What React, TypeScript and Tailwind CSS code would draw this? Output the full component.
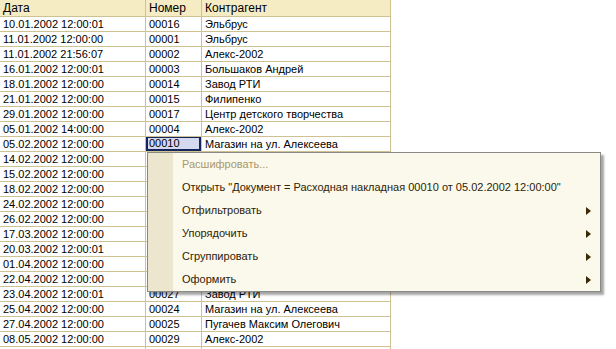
import { ReactNode } from 'react'

type Row = { date: string; num: string; agent: string }

const rows: Row[] = [
  { date: '10.01.2002 12:00:01', num: '00016', agent: 'Эльбрус' },
  { date: '11.01.2002 12:00:00', num: '00001', agent: 'Эльбрус' },
  { date: '11.01.2002 21:56:07', num: '00002', agent: 'Алекс-2002' },
  { date: '16.01.2002 12:00:01', num: '00003', agent: 'Большаков Андрей' },
  { date: '18.01.2002 12:00:00', num: '00014', agent: 'Завод РТИ' },
  { date: '21.01.2002 12:00:00', num: '00015', agent: 'Филипенко' },
  { date: '29.01.2002 12:00:00', num: '00017', agent: 'Центр детского творчества' },
  { date: '05.01.2002 14:00:00', num: '00004', agent: 'Алекс-2002' },
  { date: '05.02.2002 12:00:00', num: '00010', agent: 'Магазин на ул. Алексеева' },
  { date: '14.02.2002 12:00:00', num: '00005', agent: 'Эльбрус' },
  { date: '15.02.2002 12:00:00', num: '00006', agent: 'Филипенко' },
  { date: '18.02.2002 12:00:00', num: '00007', agent: 'Алекс-2002' },
  { date: '24.02.2002 12:00:00', num: '00008', agent: 'Завод РТИ' },
  { date: '26.02.2002 12:00:00', num: '00009', agent: 'Эльбрус' },
  { date: '17.03.2002 12:00:00', num: '00011', agent: 'Алекс-2002' },
  { date: '20.03.2002 12:00:01', num: '00012', agent: 'Большаков Андрей' },
  { date: '01.04.2002 12:00:00', num: '00013', agent: 'Эльбрус' },
  { date: '22.04.2002 12:00:00', num: '00026', agent: 'Филипенко' },
  { date: '23.04.2002 12:00:01', num: '00027', agent: 'Завод РТИ' },
  { date: '25.04.2002 12:00:00', num: '00024', agent: 'Магазин на ул. Алексеева' },
  { date: '27.04.2002 12:00:00', num: '00025', agent: 'Пугачев Максим Олегович' },
  { date: '08.05.2002 12:00:00', num: '00029', agent: 'Алекс-2002' },
  { date: '', num: '', agent: '' },
]

const menuItems = [
  { label: 'Расшифровать...', disabled: true, sub: false },
  {
    label: 'Открыть "Документ = Расходная накладная 00010 от 05.02.2002 12:00:00"',
    disabled: false,
    sub: false,
  },
  { label: 'Отфильтровать', disabled: false, sub: true },
  { label: 'Упорядочить', disabled: false, sub: true },
  { label: 'Сгруппировать', disabled: false, sub: true },
  { label: 'Оформить', disabled: false, sub: true },
]

const Cell = ({ w, children, className = '' }: { w: string; children?: ReactNode; className?: string }) => (
  <div className={`${w} shrink-0 border-r border-[#cfc292] pl-[3px] whitespace-nowrap overflow-hidden ${className}`}>
    {children}
  </div>
)

const App = () => {
  return (
    <div className="relative w-[616px] h-[349px] overflow-hidden bg-white font-['Liberation_Sans',Arial,sans-serif] text-black">
      <div className="w-[391px]">
        {/* шапка */}
        <div className="flex h-[17px] border-b border-[#cfc292] bg-[#f5ecc4] text-[12px] leading-[16px]">
          <Cell w="w-[146px]" className="pl-[2px]">Дата</Cell>
          <Cell w="w-[56px]">Номер</Cell>
          <Cell w="w-[189px]">Контрагент</Cell>
        </div>

        {rows.map((r, i) => (
          <div key={i} className="flex h-[15px] border-b border-[#cfc292] text-[11px] leading-[14px]">
            <Cell w="w-[146px]" className="pl-[2px]">{r.date}</Cell>
            {i === 8 ? (
              <div className="w-[56px] shrink-0 border-r border-[#cfc292]">
                <div className="h-[14px] border-2 border-[#14245c] border-t-[1px] bg-[#d5d9ef] pl-[1px] leading-[11px]">
                  {r.num}
                </div>
              </div>
            ) : (
              <Cell w="w-[56px]">{r.num}</Cell>
            )}
            <Cell w="w-[189px]">{r.agent}</Cell>
          </div>
        ))}
      </div>

      {/* контекстное меню */}
      <div className="absolute left-[147px] top-[152px] w-[454px] h-[140px] border border-[#8a8a84] bg-[#fbf9eb] shadow-[3px_3px_2px_rgba(0,0,0,0.35)]">
        <div className="absolute left-0 top-0 bottom-0 w-[25px] bg-[#ede6cf]" />
        <div className="relative flex flex-col">
          {menuItems.map((m) => (
            <div key={m.label} className="flex items-center h-[23px] pl-[34px] pr-[9px] text-[11px]">
              <span className={`flex-1 whitespace-nowrap ${m.disabled ? 'text-[#a8986b]' : 'text-[#2e2307]'}`}>
                {m.label}
              </span>
              {m.sub && (
                <svg width="5" height="8" viewBox="0 0 5 8">
                  <path d="M0 0 L5 4 L0 8 Z" fill="#3a2a05" />
                </svg>
              )}
            </div>
          ))}
        </div>
      </div>
    </div>
  )
}

export default App
